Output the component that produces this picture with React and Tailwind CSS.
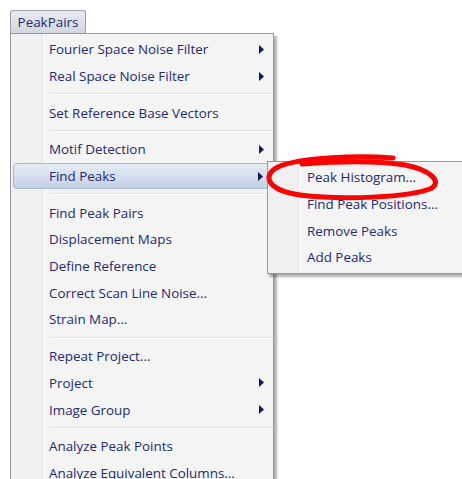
import React from 'react';

const mainItems = [
  { label: 'Fourier Space Noise Filter', sub: true },
  { label: 'Real Space Noise Filter', sub: true },
  { sep: true },
  { label: 'Set Reference Base Vectors' },
  { sep: true },
  { label: 'Motif Detection', sub: true },
  { label: 'Find Peaks', sub: true, active: true },
  { sep: true },
  { label: 'Find Peak Pairs' },
  { label: 'Displacement Maps' },
  { label: 'Define Reference' },
  { label: 'Correct Scan Line Noise...' },
  { label: 'Strain Map...' },
  { sep: true },
  { label: 'Repeat Project...' },
  { label: 'Project', sub: true },
  { label: 'Image Group', sub: true },
  { sep: true },
  { label: 'Analyze Peak Points' },
  { label: 'Analyze Equivalent Columns...' },
];

const peakItems = ['Peak Histogram...', 'Find Peak Positions...', 'Remove Peaks', 'Add Peaks'];

function Arrow() {
  return (
    <svg width="5" height="9" viewBox="0 0 5 9" className="shrink-0">
      <path d="M0 0 L5 4.5 L0 9 Z" fill="#0c1a5c" />
    </svg>
  );
}

function MenuRow({ item }) {
  if (item.sep) {
    return (
      <div className="h-[10px] pl-[39px] flex items-center">
        <div className="w-full h-[2px] border-t border-[#dfdfdf] border-b-white border-b" />
      </div>
    );
  }
  return (
    <div
      className={`h-[26.7px] flex items-center justify-between ${
        item.active
          ? 'mx-[2px] pl-[35px] pr-[7px] rounded-[4px] border border-[#a8b8d2] bg-[linear-gradient(to_bottom,#e6ecf5,#c3d0e6)]'
          : 'pl-[38px] pr-[9px]'
      }`}
    >
      <span>{item.label}</span>
      {item.sub && <Arrow />}
    </div>
  );
}

export default function App() {
  return (
    <div
      className="relative w-[462px] h-[479px] overflow-hidden bg-white text-[13.4px] text-[#212a72]"
      style={{ fontFamily: '"Open Sans", "Noto Sans", sans-serif' }}
    >
      {/* menu bar tab */}
      <div className="pt-[10px] pl-[10px]">
        <div className="w-[76px] h-[23px] rounded-t-[3px] border border-b-0 border-[#9ba1aa] bg-[linear-gradient(to_bottom,#e8ebf0,#d2d7df)] flex items-center justify-center">
          PeakPairs
        </div>
      </div>

      {/* dropdown */}
      <div className="ml-[10px] w-[264px] shadow-[3px_3px_2px_rgba(0,0,0,0.3)]">
        <div className="border border-[#979797] py-[2px] bg-[linear-gradient(to_right,#f0f0f0_31px,#e2e3e3_31px,#e2e3e3_32px,#ffffff_32px,#ffffff_33px,#f4f4f4_33px)]">
          {mainItems.map((item, i) => (
            <MenuRow key={i} item={item} />
          ))}
        </div>
      </div>

      {/* Find Peaks submenu */}
      <div className="absolute left-[267px] top-[161px] w-[196px] shadow-[2px_3px_2px_rgba(0,0,0,0.3)]">
        <div className="border border-[#979797] py-[2px] bg-[linear-gradient(to_right,#f0f0f0_30px,#e2e3e3_30px,#e2e3e3_31px,#ffffff_31px,#ffffff_32px,#f4f4f4_32px)]">
          {peakItems.map((label) => (
            <div key={label} className="h-[26.7px] flex items-center pl-[39px]">
              {label}
            </div>
          ))}
        </div>
      </div>

      {/* hand-drawn red loop */}
      <svg className="absolute left-0 top-0 pointer-events-none" width="462" height="479">
        <path
          d="M393 158 C360 155, 300 157, 278 167 C262 175, 266 190, 300 195 C340 200, 410 198, 432 188 C442 181, 430 170, 405 165 C380 161, 340 161, 302 164"
          fill="none"
          stroke="#ff0000"
          strokeWidth="5"
          strokeLinecap="round"
        />
      </svg>
    </div>
  );
}
